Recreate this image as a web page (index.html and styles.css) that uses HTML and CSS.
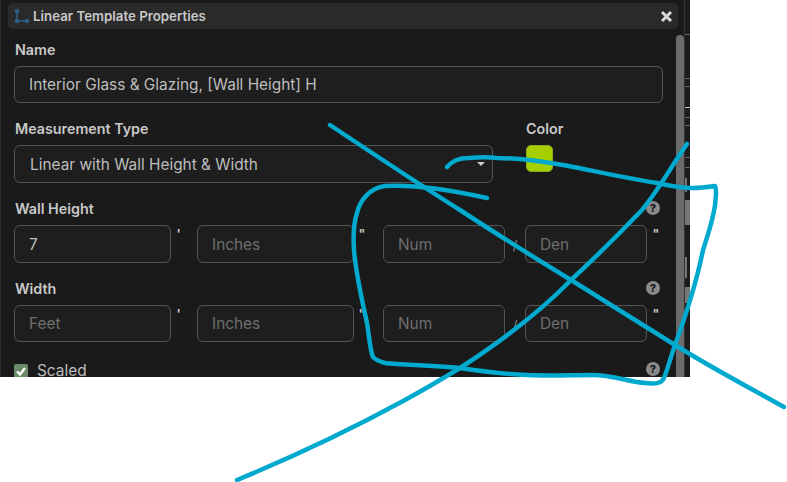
FILE: index.html
```html
<!DOCTYPE html>
<html lang="en">
<head>
	<meta charset="UTF-8">
	<title>Linear Template Properties</title>
	<link rel="stylesheet" href="styles.css">
</head>
<body>
	<div class="window">
		<div class="dialog">
			<div class="header">
				<svg class="logo" width="16" height="16" viewBox="0 0 16 16">
					<path d="M3 3V13H13" fill="none" stroke="#2c5f88" stroke-width="1.6"/>
					<rect x="1" y="1" width="4" height="4" rx="1" fill="#2c5f88"/>
					<rect x="1" y="11" width="4" height="4" rx="1" fill="#2c5f88"/>
					<rect x="11" y="11" width="4" height="4" rx="1" fill="#2c5f88"/>
				</svg>
				<span class="title">Linear Template Properties</span>
				<svg class="close" width="13" height="13" viewBox="0 0 13 13">
					<path d="M2 2L11 11M11 2L2 11" fill="none" stroke="#d8d8d8" stroke-width="3"/>
				</svg>
			</div>
			<div class="body">
				<div class="form">
					<label class="label">Name</label>
					<div class="input full">Interior Glass &amp; Glazing, [Wall Height] H</div>

					<div class="type-row">
						<div class="type-col">
							<label class="label">Measurement Type</label>
							<div class="input select">Linear with Wall Height &amp; Width<span class="caret"></span></div>
						</div>
						<div class="color-col">
							<label class="label">Color</label>
							<div class="swatch"></div>
						</div>
					</div>

					<div class="label-row"><label class="label">Wall Height</label><span class="help">?</span></div>
					<div class="dims">
						<div class="input">7</div><span class="unit">'</span>
						<div class="input empty">Inches</div><span class="unit">"</span>
						<div class="input empty">Num</div><span class="unit slash">/</span>
						<div class="input empty">Den</div><span class="unit">"</span>
					</div>

					<div class="label-row"><label class="label">Width</label><span class="help">?</span></div>
					<div class="dims short">
						<div class="input empty">Feet</div><span class="unit">'</span>
						<div class="input empty">Inches</div><span class="unit">"</span>
						<div class="input empty">Num</div><span class="unit slash">/</span>
						<div class="input empty">Den</div><span class="unit">"</span>
					</div>

					<div class="check-row">
						<span class="check">
							<svg width="14" height="14" viewBox="0 0 14 14"><path d="M3 7.5L6 10.5L11 4" fill="none" stroke="#fff" stroke-width="2.4"/></svg>
						</span>
						<span class="check-text">Scaled</span>
						<span class="help">?</span>
					</div>
				</div>
				<div class="scrollbar"></div>
			</div>
		</div>
		<div class="strip">
			<i class="tick t1"></i>
			<i class="tick t2"></i>
			<i class="tick t3"></i>
			<i class="tick t4"></i>
			<i class="tick t5"></i>
			<i class="tick t6"></i>
			<i class="tick t7"></i>
			<i class="tick t8"></i>
			<i class="tick t9"></i>
			<i class="tick t10"></i>
			<i class="tick t11"></i>
			<i class="tick t12"></i>
		</div>
	</div>

	<!-- ink scribbled over the screenshot -->
	<svg class="ink" width="787" height="482" viewBox="0 0 787 482">
		<path d="M330 125 C 375 155, 420 185, 460 210 C 495 233, 535 258, 571 280 C 605 301, 640 323, 675 345 C 710 367, 750 388, 784 407"/>
		<path d="M237 480 C 295 456, 350 430, 405 400 C 425 389, 442 379, 460 368 C 500 342, 540 312, 571 280 C 597 256, 620 233, 642 210 C 660 188, 672 165, 687 144"/>
		<path d="M447 167 C 452 161, 458 158, 468 158 C 480 157, 490 157, 497 158 C 520 158, 540 161, 563 165 C 595 171, 625 178, 657 183 C 670 186, 682 188, 693 188 C 700 188, 708 187, 715 186 C 717 190, 716 195, 715 205 C 713 220, 708 235, 703 250 C 698 275, 687 312, 675 345 C 671 356, 668 368, 664 378 C 661 384, 655 384, 645 383 C 630 382, 612 375, 593 375 C 570 375, 550 376, 527 375 C 500 374, 480 371, 460 368 C 430 365, 405 365, 385 363 C 378 361, 375 359, 373 357 C 370 350, 369 335, 367 323 C 362 300, 356 275, 354 250 C 353 235, 354 222, 357 213 C 360 200, 370 188, 385 186 C 420 184, 460 192, 487 198"/>
	</svg>
</body>
</html>
```

FILE: styles.css
```css
*{
	margin: 0;
	padding: 0;
	box-sizing: border-box;
}
html,body{
	background: #fff;
}
body{
	font-family: Inter, "Liberation Sans", sans-serif;
	position: relative;
	width: 787px;
	height: 482px;
	overflow: hidden;
}
.window{
	display: flex;
	width: 690px;
	height: 377px;
	overflow: hidden;
	background: #1a1a1a;
}
.dialog{
	width: 685px;
	height: 377px;
	padding: 3px 0 0 1px;
	border-left: 1px solid #2e2e2e;
	border-right: 1px solid #333;
}
.header{
	display: flex;
	align-items: center;
	width: 670px;
	height: 26px;
	margin-left: 6px;
	padding: 0 5px 0 6px;
	background: #2a2a2a;
	border-radius: 5px;
}
.logo{
	margin-right: 3px;
}
.title{
	flex: 1;
	font-size: 13.3px;
	font-weight: 600;
	color: #c8c8c8;
}
.body{
	display: flex;
}
.form{
	width: 649px;
	margin-left: 12px;
	padding-top: 12px;
}
.scrollbar{
	width: 9px;
	height: 342px;
	margin: 6px 0 0 13px;
	background: #6b6b6b;
	border-radius: 4px 4px 0 0;
}
.label{
	display: block;
	padding-left: 1px;
	font-size: 14.3px;
	font-weight: 600;
	line-height: 17px;
	color: #c8c8c8;
	margin-bottom: 8px;
}
.input{
	display: flex;
	align-items: center;
	height: 38px;
	padding-left: 14px;
	background: #1e1e1e;
	border: 1px solid #555;
	border-radius: 6px;
	font-size: 15.4px;
	color: #bdbdbd;
}
.empty{
	color: #6e6e6e;
}
.full{
	width: 649px;
	height: 37px;
}
.type-row{
	display: flex;
	margin-top: 17px;
}
.type-col{
	width: 512px;
}
.color-col .label{
	padding-left: 0;
}
.select{
	position: relative;
	width: 479px;
	padding-left: 15px;
}
.caret{
	position: absolute;
	right: 7px;
	top: 16px;
	border: 4px solid transparent;
	border-top: 4px solid #ccc;
	border-bottom: 0;
}
.swatch{
	width: 27px;
	height: 27px;
	background: #a6cf00;
	border: 1px solid #8aa820;
	border-radius: 5px;
}
.label-row{
	display: flex;
	justify-content: space-between;
	align-items: flex-start;
	width: 646px;
	margin-top: 17px;
}
.label-row .help{
	margin-top: 1px;
}
.help{
	display: block;
	width: 14px;
	height: 14px;
	border-radius: 50%;
	background: #8a8a8a;
	color: #1a1a1a;
	font-size: 11px;
	font-weight: 800;
	line-height: 14px;
	text-align: center;
}
.dims{
	display: flex;
}
.dims .input{
	flex: none;
	width: 157px;
}
.dims .input:nth-child(5),
.dims .input:nth-child(7){
	width: 122px;
}
.short .input{
	height: 37px;
}
.unit{
	flex: none;
	width: 26px;
	padding: 1px 11px 0 0;
	font-size: 13px;
	font-weight: 600;
	line-height: 16px;
	color: #ccc;
	text-align: center;
}
.unit:nth-child(4){
	width: 29px;
	padding-right: 13px;
}
.dims .slash{
	width: 20px;
	padding: 12px 0 0;
	font-weight: 400;
	color: #888;
}
.dims .unit:last-child{
	width: 18px;
	padding-right: 0;
}
.check-row{
	display: flex;
	align-items: center;
	width: 646px;
	margin-top: 19px;
}
.check{
	display: block;
	width: 14px;
	height: 14px;
	margin-right: 9px;
	background: #6b8a68;
	border-radius: 2px;
}
.check svg{
	display: block;
}
.check-text{
	flex: 1;
	margin-top: 1px;
	font-size: 15.4px;
	line-height: 18px;
	color: #bdbdbd;
}
.check-row .help{
	margin-bottom: 4px;
}
.strip{
	display: flex;
	flex-direction: column;
	width: 5px;
	background: #1c1c1c;
}
.tick{
	display: block;
	flex: none;
	height: 1px;
	background: #666;
}
.t1{ margin-top: 34px; }
.t2{ margin-top: 43px; }
.t3{ margin-top: 7px; }
.t4{ margin-top: 20px; background: #ccc; }
.t5{ margin-top: 9px; }
.t6{ margin-top: 7px; }
.t7{ margin-top: 31px; }
.t8{ margin-top: 9px; }
.t9{ margin-top: 10px; height: 14px; width: 2px; background: #777; }
.t10{ margin-top: 8px; height: 25px; background: #777; }
.t11{ margin-top: 32px; height: 21px; width: 2px; background: #777; }
.t12{ margin-top: 9px; height: 16px; background: #777; }
.ink{
	position: absolute;
	left: 0;
	top: 0;
}
.ink path{
	fill: none;
	stroke: #00a9ce;
	stroke-width: 4.5;
	stroke-linecap: round;
	stroke-linejoin: round;
}
```
